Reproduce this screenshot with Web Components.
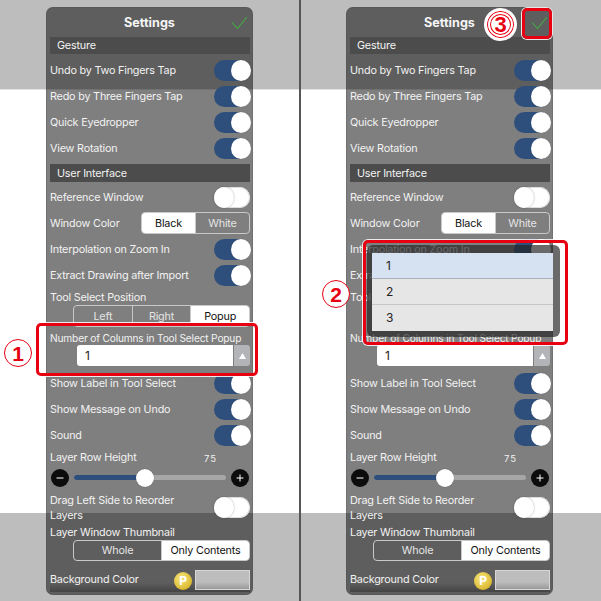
<!DOCTYPE html>
<html lang="en"><head><meta charset="utf-8"><title>Settings</title>
<style>
html,body{margin:0;padding:0;width:601px;height:601px;overflow:hidden}
body{font-family:Inter,"Liberation Sans",sans-serif;background:linear-gradient(#bdbdbd 0 89px,#e4e4e4 89px 90px,#fff 90px 513px,#bdbdbd 513px)}
#stage{position:relative;display:grid;grid-template-columns:299px 2px 300px;width:601px;height:601px}
#rule{background:#565656}
.col{padding:7px 0 0 46px;box-sizing:border-box}
.col.r{padding-left:45px}
</style></head><body>
<div id="stage">
  <div class="col"><settings-panel></settings-panel></div>
  <div id="rule"></div>
  <div class="col r"><settings-panel></settings-panel></div>
  <red-box style="left:36px;top:323px;width:222px;height:53px"></red-box>
  <step-mark style="left:4px;top:339px">1</step-mark>
  <select-popup style="left:367px;top:245px"></select-popup>
  <red-box style="left:363px;top:240px;width:205px;height:105px"></red-box>
  <step-mark style="left:322px;top:280px">2</step-mark>
  <red-box style="left:522px;top:8px;width:30px;height:31px"></red-box>
  <step-mark big style="left:484px;top:8px">3</step-mark>
</div>
<script>
function def(name, css, html){
  customElements.define(name, class extends HTMLElement{
    constructor(){super();const r=this.attachShadow({mode:'open'});
      r.innerHTML='<style>'+css+'</style>'+html;}
  });
}
const TXT='font-size:10.8px;letter-spacing:-.2px;color:#f2f2f2;';
def('x-toggle',`
 :host{display:block;width:36px;height:21px;position:relative;border-radius:11px;background:#fff;box-shadow:inset 0 0 0 1px #ddd}
 :host([on]){background:#2e4f7c;box-shadow:none}
 i{position:absolute;top:0;left:0;width:20px;height:21px;border-radius:50%;background:#fff;box-shadow:0 0 2px rgba(0,0,0,.35)}
 :host([on]) i{left:16.5px;box-shadow:0 0 1px rgba(0,0,0,.3)}
`,'<i></i>');
def('set-row',`
 :host{display:flex;align-items:center;justify-content:space-between;height:26px;line-height:15px;${TXT}}
`,'<span><slot></slot></span><slot name="end"></slot>');
def('set-section',`
 :host{display:flex;align-items:center;box-sizing:border-box;padding-left:7px;background:#4c4c4c;${TXT}}
`,'<slot></slot>');
def('set-label',`
 :host{display:flex;align-items:center;white-space:nowrap;${TXT}}
`,'<slot></slot>');
def('seg-control',`
 :host{display:flex;box-sizing:border-box;margin-left:auto;border:1px solid #c9c9c9;border-radius:4px;overflow:hidden;font-size:10.8px;letter-spacing:-.18px;color:#e4e4e4}
`,'<slot></slot>');
def('seg-item',`
 :host{flex:1;display:flex;align-items:center;justify-content:center;box-shadow:-1px 0 0 #c9c9c9;margin-left:1px}
 :host(:first-child){box-shadow:none;margin-left:0}
 :host([sel]){background:#fff;color:#111}
`,'<slot></slot>');
def('num-field',`
 :host{display:flex;height:21px;margin-left:27px;gap:1px;font-size:12px;color:#222}
 b{flex:1;font-weight:400;background:#fff;border-radius:3px 0 0 3px;padding-left:8px;line-height:21px}
 i{width:16px;background:#b2b4b8;border-radius:0 3px 3px 0;display:flex;align-items:center;justify-content:center}
 svg{width:7px;height:6px}
`,'<b><slot></slot></b><i><svg viewBox="0 0 7 6"><path d="M3.5 0L7 6H0z" fill="#fff"/></svg></i>');
def('row-slider',`
 :host{display:flex;align-items:center;height:23px;gap:5px;margin-left:1px;margin-right:1px}
 .b{width:18px;height:18px;flex:none}
 .t{flex:1;height:5px;border-radius:3px;background:#a6a6a6;position:relative}
 .t u{position:absolute;left:0;top:0;bottom:0;width:71px;background:#2e4f7c;border-radius:3px 0 0 3px}
 .t i{position:absolute;left:62px;top:-6.5px;width:18px;height:18px;border-radius:50%;background:#fff;box-shadow:0 0 1px rgba(0,0,0,.4)}
`,`<svg class="b" viewBox="0 0 18 18"><circle cx="9" cy="9" r="9" fill="#0c0c0c"/><path d="M5.5 9h7" stroke="#fff" stroke-width="1"/></svg>
<div class="t"><u></u><i></i></div>
<svg class="b" viewBox="0 0 18 18"><circle cx="9" cy="9" r="9" fill="#0c0c0c"/><path d="M5.5 9h7M9 5.5v7" stroke="#fff" stroke-width="1"/></svg>`);
def('settings-panel',`
 :host{display:block;width:207px;height:588px;box-sizing:border-box;padding:0 3px 0 4px;background:rgba(0,0,0,.5);border-radius:7px;box-shadow:inset 0 0 0 1px rgba(70,70,70,.25)}
 header{height:30px;position:relative;display:flex;align-items:center;justify-content:center;color:#f5f5f5;font-weight:700;font-size:12.6px;padding-right:1px}
 header svg{position:absolute;left:181px;top:9px;width:17px;height:14px}
 .g1{height:17px;margin-bottom:3px}
 .mt3{margin-top:3px}
 .g2{height:18px;margin-bottom:2px}
 .val{display:flex;justify-content:space-between;align-items:center;height:18px;${TXT}}
 .val span{margin-top:1px}
 .val em{font-style:normal;font-size:9.5px;letter-spacing:1px;margin-right:33px;padding-top:3px}
 .tall{height:34px}
 .tall span{display:block;width:150px;margin-top:3px}
 .tall x-toggle{margin-top:2px}
 .lb{height:16px;padding-top:1px}
 .small{font-size:10.2px;letter-spacing:-.18px;height:15px;margin-top:3px}
 .bg{margin:7px 0 0;height:24px;align-items:flex-start;display:flex;justify-content:space-between;background:linear-gradient(transparent 62%,rgba(0,0,0,.28));${TXT}}
 .bg span{line-height:23px}
 .bg div{display:flex;align-items:center;height:22px}
 .coin{width:18px;height:18px;border-radius:50%;background:radial-gradient(circle at 40% 35%,#f7e77e,#d9b62c 75%,#b8952a);color:#fff;font:700 12px/18px Inter,sans-serif;font-style:normal;text-align:center;margin-right:3px;margin-top:3px}
 .sw{width:55px;height:20px;box-sizing:border-box;border:1px solid #d6d6d6;background:linear-gradient(#bdbdbd 60%,#9a9a9a);margin-top:1px}
`,`<header><span>Settings</span><svg viewBox="0 0 17 14"><path d="M1 6.5l5.5 6L16 1" fill="none" stroke="#42b042" stroke-width="1.1"/></svg></header>
<set-section class="g1">Gesture</set-section>
<set-row>Undo by Two Fingers Tap<x-toggle slot="end" on></x-toggle></set-row>
<set-row>Redo by Three Fingers Tap<x-toggle slot="end" on></x-toggle></set-row>
<set-row>Quick Eyedropper<x-toggle slot="end" on></x-toggle></set-row>
<set-row>View Rotation<x-toggle slot="end" on></x-toggle></set-row>
<set-section class="g2 mt3">User Interface</set-section>
<set-row>Reference Window<x-toggle slot="end"></x-toggle></set-row>
<set-row>Window Color<seg-control slot="end" style="width:109px;height:22px"><seg-item sel>Black</seg-item><seg-item>White</seg-item></seg-control></set-row>
<set-row>Interpolation on Zoom In<x-toggle slot="end" on></x-toggle></set-row>
<set-row>Extract Drawing after Import<x-toggle slot="end" on></x-toggle></set-row>
<set-label class="lb">Tool Select Position</set-label>
<seg-control style="width:177px;height:22px"><seg-item>Left</seg-item><seg-item>Right</seg-item><seg-item sel>Popup</seg-item></seg-control>
<set-label class="small">Number of Columns in Tool Select Popup</set-label>
<num-field style="margin-bottom:4px">1</num-field>
<set-row>Show Label in Tool Select<x-toggle slot="end" on></x-toggle></set-row>
<set-row>Show Message on Undo<x-toggle slot="end" on></x-toggle></set-row>
<set-row>Sound<x-toggle slot="end" on></x-toggle></set-row>
<div class="val"><span>Layer Row Height</span><em>75</em></div>
<row-slider></row-slider>
<set-row class="tall"><span>Drag Left Side to Reorder Layers</span><x-toggle slot="end"></x-toggle></set-row>
<set-label class="lb">Layer Window Thumbnail</set-label>
<seg-control style="width:177px;height:21px"><seg-item>Whole</seg-item><seg-item sel>Only Contents</seg-item></seg-control>
<div class="bg"><span>Background Color</span><div><i class="coin">P</i><i class="sw"></i></div></div>`);
def('red-box',`
 :host{position:absolute;display:block;box-sizing:border-box;border:3px solid #e60012;border-radius:5px;box-shadow:0 0 0 1px rgba(255,255,255,.85)}
`,'');
def('step-mark',`
 :host{position:absolute;display:flex;align-items:center;justify-content:center;box-sizing:border-box;width:28px;height:28px;border-radius:50%;background:#fff;border:1px solid #e60012;color:#e60012;font:700 21px/1 "Liberation Sans",sans-serif}
 :host([big]){width:33px;height:33px;border:3px solid #fff;box-shadow:inset 0 0 0 1px #e60012,inset 0 0 0 3px #fff,inset 0 0 0 4px #e60012;font-size:22px}
`,'<slot></slot>');
def('select-popup',`
 :host{position:absolute;display:block;box-sizing:border-box;width:193px;height:92px;padding:8px 7px 6px 5px;background:rgba(35,35,35,.68);border-radius:6px;font:12px/1 Inter,sans-serif;color:#222}
 div{box-sizing:border-box;height:26px;padding-left:14px;display:flex;align-items:center;background:#e6e6e6;border-bottom:1.5px solid #c6c6c6}
 div:first-of-type{background:#d6e2f2;border-bottom-color:#a9b1bb}
 div:last-child{border-bottom:0}
`,'<div>1</div><div>2</div><div>3</div>');
</script>
</body></html>
